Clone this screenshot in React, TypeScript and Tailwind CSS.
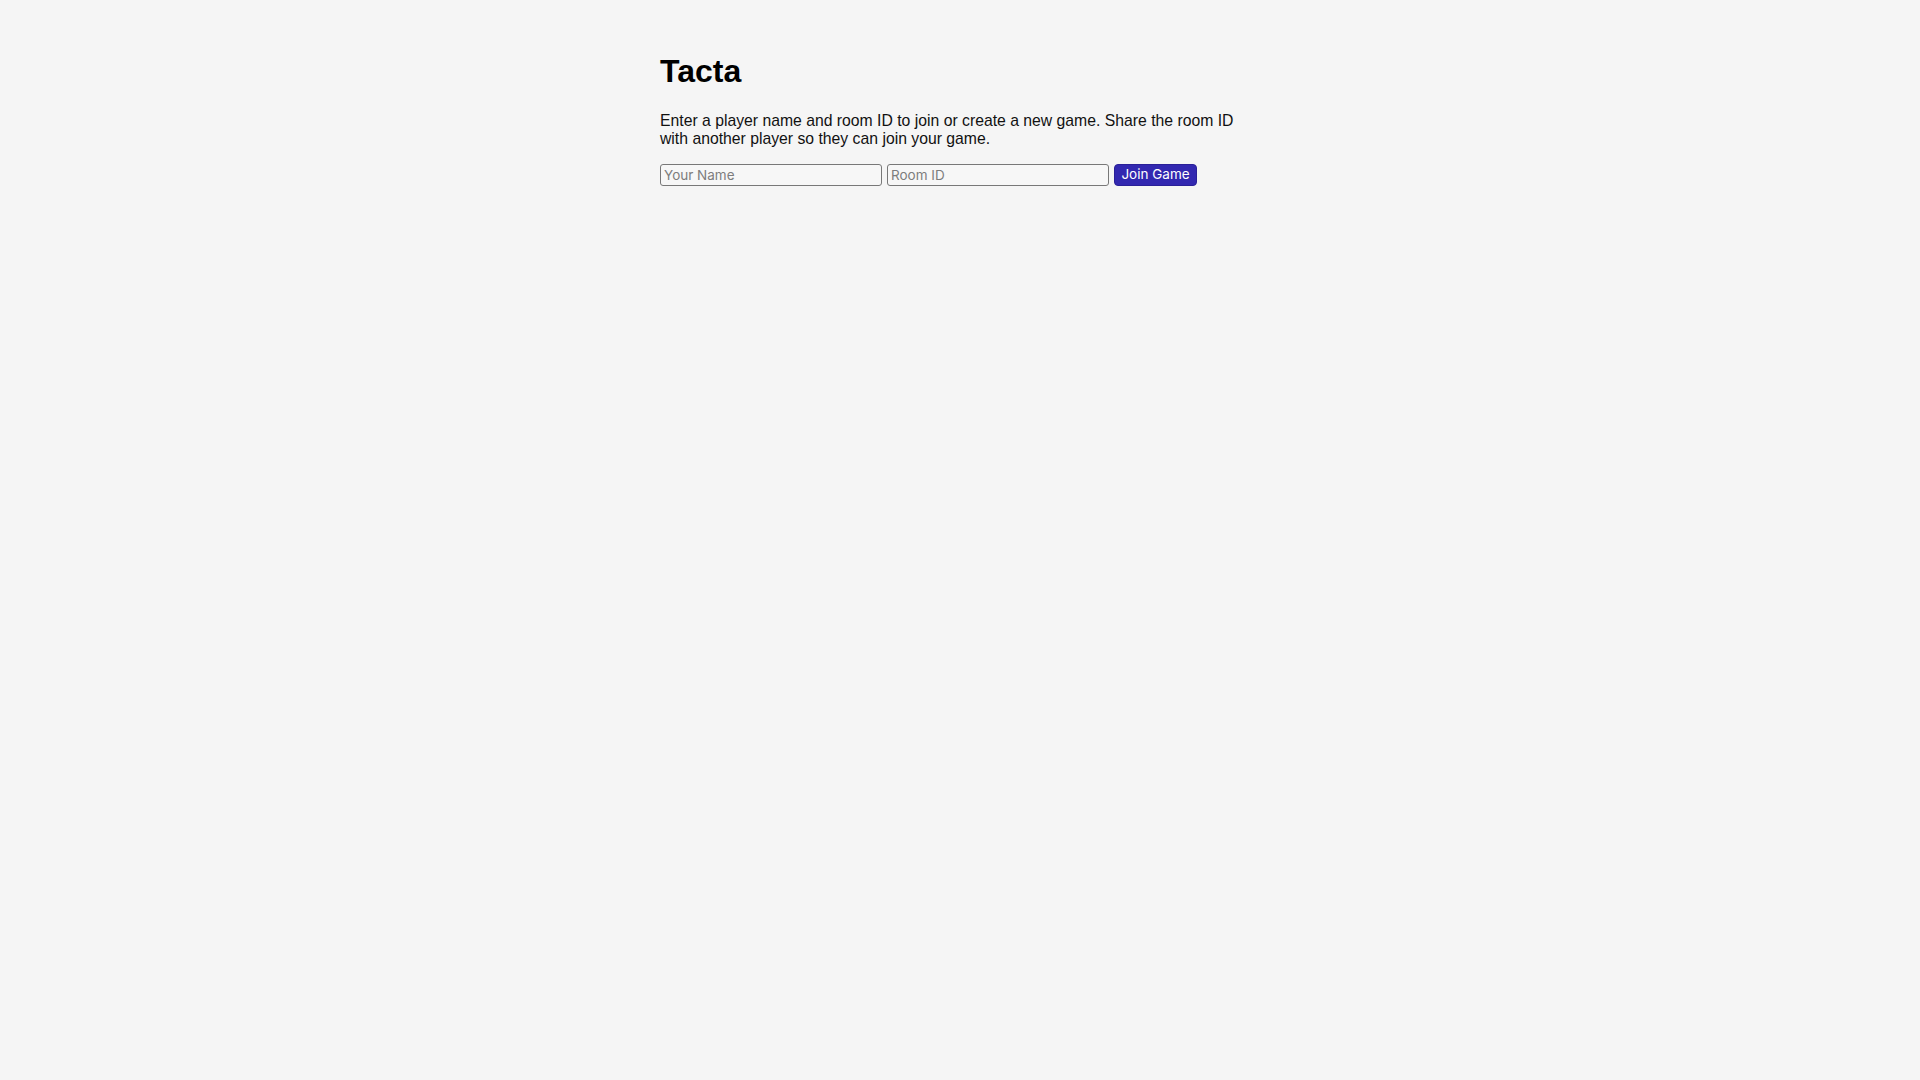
import { useState } from 'react'

export default function App() {
  const [nom, setNom] = useState('')
  const [sala, setSala] = useState('')

  return (
    <div className="min-h-screen bg-[#f5f5f5] text-black" style={{ fontFamily: '"Liberation Sans", Arial, sans-serif' }}>
      <div className="max-w-[600px] mx-auto pt-8">
        <h1 className="text-[32px] font-bold leading-[normal] my-[21.44px]">Tacta</h1>
        <p className="text-[15.75px] leading-[18.4px] mt-4 mb-[15px] text-[#111]">
          Enter a player name and room ID to join or create a new game. Share the room ID with another player so they can join your game.
        </p>

        {/* formulari */}
        <form onSubmit={(e) => e.preventDefault()} className="flex items-center gap-[5px]">
          <input
            type="text"
            placeholder="Your Name"
            value={nom}
            onChange={(e) => setNom(e.target.value)}
            className="w-[222px] h-[22px] px-[3px] border border-[#787878] rounded-[3px] bg-[#f7f7f7] text-[13.5px] font-['Inter',sans-serif] placeholder:text-[#7d7d7d] outline-none"
          />
          <input
            type="text"
            placeholder="Room ID"
            value={sala}
            onChange={(e) => setSala(e.target.value)}
            className="w-[222px] h-[22px] px-[3px] border border-[#787878] rounded-[3px] bg-[#f7f7f7] text-[13.5px] font-['Inter',sans-serif] placeholder:text-[#7d7d7d] outline-none"
          />
          <button
            type="submit"
            className="w-[83px] h-[22px] rounded-[4px] border border-[#2a2098] bg-[#3228b0] text-white text-[13.5px] font-['Inter',sans-serif] leading-none"
          >
            Join Game
          </button>
        </form>
      </div>
    </div>
  )
}
